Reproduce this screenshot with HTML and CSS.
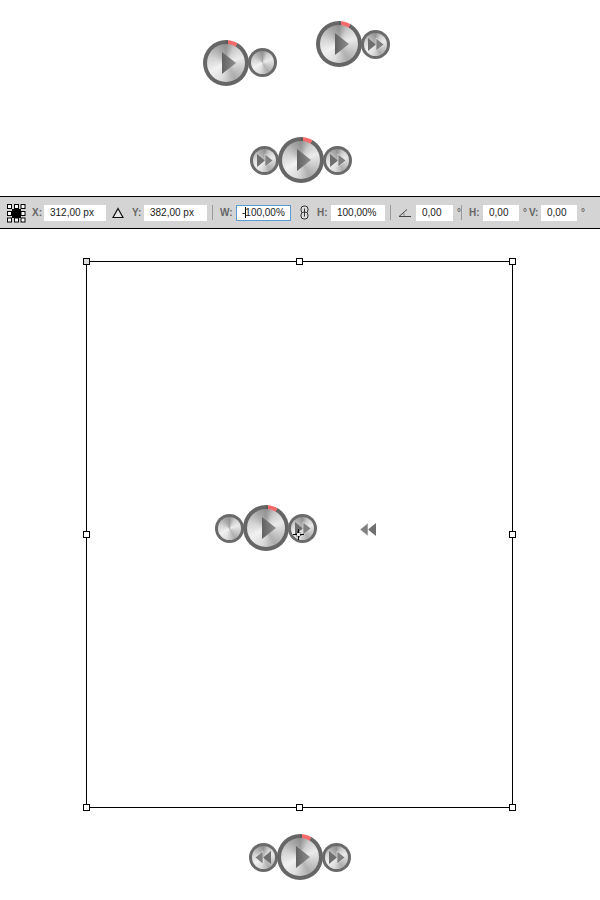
FILE: index.html
```html
<!DOCTYPE html>
<html lang="en">
<head>
    <meta charset="UTF-8">
    <title>Player buttons</title>
    <link rel="stylesheet" href="styles.css">
</head>
<body>
    <svg class="defs" width="0" height="0">
        <defs>
            <linearGradient id="tri" x1="0" y1="0" x2="1" y2="0">
                <stop offset="0" stop-color="#626262"/>
                <stop offset="1" stop-color="#8e8e8e"/>
            </linearGradient>
            <symbol id="play" viewBox="0 0 46 46">
                <path d="M19 12 L33 23 L19 34 Z" fill="url(#tri)"/>
            </symbol>
            <symbol id="fwd" viewBox="0 0 29 29">
                <path d="M7 8 L15 14.5 L7 21 Z" fill="#6f6f6f"/>
                <path d="M15 8 L23 14.5 L15 21 Z" fill="#808080" stroke="#eee" stroke-width=".6"/>
            </symbol>
            <symbol id="rew" viewBox="0 0 29 29">
                <path d="M22 8 L14 14.5 L22 21 Z" fill="#6f6f6f"/>
                <path d="M14 8 L6 14.5 L14 21 Z" fill="#808080" stroke="#eee" stroke-width=".6"/>
            </symbol>
        </defs>
    </svg>

    <!-- top examples -->
    <div class="row row-one">
        <div class="player">
            <div class="knob big"><svg><use href="#play"/></svg></div>
            <div class="knob small"></div>
        </div>
        <div class="player raised">
            <div class="knob big"><svg><use href="#play"/></svg></div>
            <div class="knob small"><svg><use href="#fwd"/></svg></div>
        </div>
    </div>
    <div class="row row-two">
        <div class="player">
            <div class="knob small"><svg><use href="#fwd"/></svg></div>
            <div class="knob big"><svg><use href="#play"/></svg></div>
            <div class="knob small"><svg><use href="#fwd"/></svg></div>
        </div>
    </div>

    <!-- options bar -->
    <div class="toolbar">
        <svg class="ref-point" width="20" height="20" viewBox="0 0 20 20">
            <g fill="#fff" stroke="#000">
                <rect x="1.5" y="1.5" width="4" height="4"/>
                <rect x="8.5" y="1.5" width="4" height="4"/>
                <rect x="15" y="1.5" width="4" height="4"/>
                <rect x="1.5" y="8.5" width="4" height="4"/>
                <rect x="15" y="8.5" width="4" height="4"/>
                <rect x="1.5" y="15" width="4" height="4"/>
                <rect x="8.5" y="15" width="4" height="4"/>
                <rect x="15" y="15" width="4" height="4"/>
            </g>
            <rect x="6" y="6" width="9" height="9" fill="#000"/>
        </svg>
        <span class="lbl lbl-x">X:</span>
        <span class="field f-x">312,00 px</span>
        <svg class="delta" width="12" height="12" viewBox="0 0 12 12"><path d="M6 1.5 L11 10.5 H1 Z" fill="#e8e8e8" stroke="#111" stroke-width="1.2"/></svg>
        <span class="lbl lbl-y">Y:</span>
        <span class="field f-y">382,00 px</span>
        <i class="sep sep-a"></i>
        <span class="lbl lbl-w">W:</span>
        <span class="field f-w focus"><b class="caret-text">-</b><i class="caret"></i>100,00%</span>
        <svg class="link" width="9" height="15" viewBox="0 0 9 15">
            <rect x="1" y="1" width="7" height="7" rx="3" fill="#ddd" stroke="#333"/>
            <rect x="1" y="7" width="7" height="7" rx="3" fill="#ddd" stroke="#333"/>
            <path d="M4.5 3.5 V11.5" stroke="#333"/>
        </svg>
        <span class="lbl lbl-h">H:</span>
        <span class="field f-h">100,00%</span>
        <i class="sep sep-b"></i>
        <svg class="angle" width="14" height="10" viewBox="0 0 14 10"><path d="M1 8.5 H13 M1 8.5 L9 1.5" stroke="#444" fill="none"/><path d="M6 8 V5" stroke="#888"/></svg>
        <span class="field f-a">0,00</span>
        <span class="lbl deg">°</span>
        <i class="sep sep-c"></i>
        <span class="lbl lbl-h2">H:</span>
        <span class="field f-s">0,00</span>
        <span class="lbl deg">°</span>
        <span class="lbl lbl-v">V:</span>
        <span class="field f-s">0,00</span>
        <span class="lbl deg">°</span>
    </div>

    <!-- canvas with transform box -->
    <div class="frame">
        <i class="handle h-tl"></i><i class="handle h-tc"></i><i class="handle h-tr"></i>
        <i class="handle h-ml"></i><i class="handle h-mr"></i>
        <i class="handle h-bl"></i><i class="handle h-bc"></i><i class="handle h-br"></i>

        <div class="player on-canvas">
            <div class="knob small"></div>
            <div class="knob big"><svg><use href="#play"/></svg></div>
            <div class="knob small"><svg><use href="#fwd"/></svg></div>
        </div>
        <svg class="stray" width="29" height="29"><use href="#rew"/></svg>
        <svg class="cursor" width="11" height="11" viewBox="0 0 11 11">
            <path d="M5.5 0 V4 M5.5 7 V11 M0 5.5 H4 M7 5.5 H11" stroke="#000"/>
            <circle cx="5.5" cy="5.5" r="2.5" fill="none" stroke="#000" stroke-dasharray="1.5 1"/>
        </svg>
    </div>

    <div class="row row-last">
        <div class="player">
            <div class="knob small"><svg><use href="#rew"/></svg></div>
            <div class="knob big"><svg><use href="#play"/></svg></div>
            <div class="knob small"><svg><use href="#fwd"/></svg></div>
        </div>
    </div>
</body>
</html>
```

FILE: styles.css
```css
/* General */
body {
    margin: 0;
    width: 600px;
    height: 900px;
    overflow: hidden;
    background: #fff;
    font-family: "Liberation Sans", Arial, sans-serif;
}

.defs {
    position: absolute;
}

/* Rows of players */
.row {
    display: flex;
}

.row-one {
    height: 102px;
    padding: 23px 0 0 203px;
    box-sizing: border-box;
    gap: 39px;
}

.row-two {
    height: 94px;
    padding: 22px 0 0 250px;
    box-sizing: border-box;
}

.row-last {
    padding: 26px 0 0 249px;
}

.player {
    display: flex;
    align-items: center;
}

.raised {
    margin-top: -2px;
    align-self: flex-start;
}

.player .knob + .knob {
    margin-left: -1px;
}

/* Knobs */
.knob {
    position: relative;
    flex: none;
    border-radius: 50%;
    filter: blur(0.35px);
}

.knob::before {
    content: "";
    position: absolute;
    border-radius: 50%;
    background:
        radial-gradient(circle at 50% 50%, rgba(255, 255, 255, 0.25) 0, rgba(255, 255, 255, 0) 70%),
        conic-gradient(#8f8f8f 0deg, #c9c9c9 30deg, #e9e9e9 70deg, #c4c4c4 115deg, #a9a9a9 150deg, #dcdcdc 195deg, #f0f0f0 240deg, #d0d0d0 290deg, #a6a6a6 330deg, #8f8f8f 360deg);
}

.knob svg {
    position: absolute;
    inset: 0;
    width: 100%;
    height: 100%;
}

.big {
    width: 46px;
    height: 46px;
    background: conic-gradient(#5c5c5c 0deg 6deg, #f56a6a 6deg 30deg, #666 30deg 360deg);
}

.big::before {
    inset: 4px;
}

.small {
    width: 29px;
    height: 29px;
    background: #6a6a6a;
}

.small::before {
    inset: 3px;
}

/* Options bar */
.toolbar {
    position: relative;
    display: flex;
    align-items: center;
    box-sizing: border-box;
    height: 33px;
    padding-left: 6px;
    background: #d4d4d4;
    border-top: 1px solid #000;
    border-bottom: 1px solid #000;
    font-size: 10px;
    color: #222;
}

.lbl {
    font-weight: bold;
    color: #666;
}

.field {
    box-sizing: border-box;
    height: 16px;
    line-height: 16px;
    padding-left: 6px;
    background: #fff;
    white-space: nowrap;
}

.focus {
    border: 1px solid #5b9bd5;
    line-height: 14px;
    padding-left: 5px;
}

.caret-text {
    font-weight: normal;
}

.caret {
    display: inline-block;
    width: 1px;
    height: 11px;
    margin-right: -1px;
    vertical-align: -2px;
    background: #000;
}

.sep {
    width: 1px;
    height: 15px;
    background: #9a9a9a;
}

.ref-point { margin-right: 6px; }
.lbl-x { width: 12px; }
.f-x { width: 62px; }
.delta { margin-left: 6px; }
.lbl-y { margin-left: 8px; width: 12px; }
.f-y { width: 63px; }
.sep-a { margin-left: 5px; }
.lbl-w { margin-left: 7px; width: 16px; }
.f-w { width: 55px; }
.link { margin-left: 9px; }
.lbl-h { margin-left: 8px; width: 14px; }
.f-h { width: 54px; }
.sep-b { margin-left: 5px; }
.angle { margin-left: 7px; }
.f-a { width: 37px; margin-left: 4px; }
.deg { width: 8px; margin-left: 4px; }
.sep-c { margin-left: -4px; margin-right: 0; }
.lbl-h2 { margin-left: 7px; width: 14px; }
.f-s { width: 36px; }
.lbl-v { margin-left: -2px; width: 12px; }

/* Transform box */
.frame {
    position: relative;
    box-sizing: border-box;
    width: 427px;
    height: 547px;
    margin: 32px 0 0 86px;
    border: 1px solid #000;
}

.handle {
    position: absolute;
    width: 5px;
    height: 5px;
    background: #fff;
    border: 1px solid #000;
}

.h-tl { left: -4px; top: -4px; background: #ddd; }
.h-tc { left: 209px; top: -4px; }
.h-tr { right: -4px; top: -4px; }
.h-ml { left: -4px; top: 269px; }
.h-mr { right: -4px; top: 269px; }
.h-bl { left: -4px; bottom: -4px; }
.h-bc { left: 209px; bottom: -4px; }
.h-br { right: -4px; bottom: -4px; }

.on-canvas {
    position: absolute;
    left: 128px;
    top: 243px;
}

.stray {
    position: absolute;
    left: 267px;
    top: 253px;
}

.cursor {
    position: absolute;
    left: 206px;
    top: 267px;
}
```
